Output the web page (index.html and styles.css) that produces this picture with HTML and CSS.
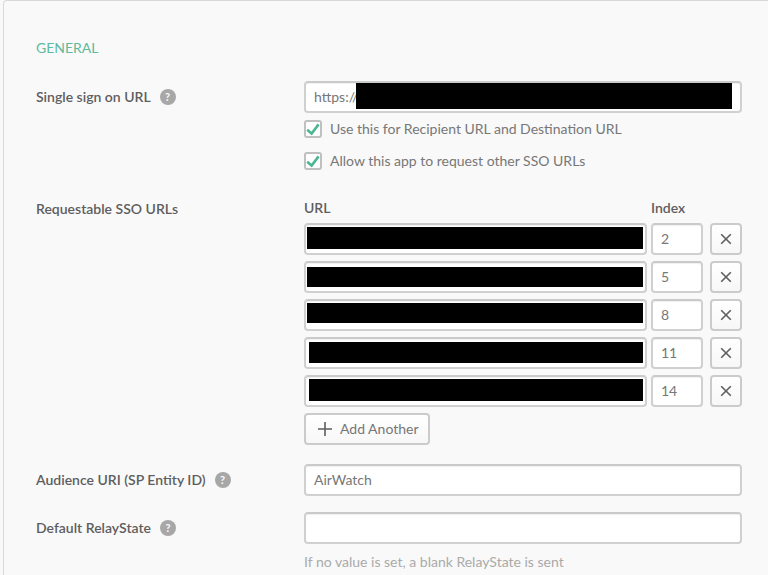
FILE: index.html
```html
<!DOCTYPE html>
<html lang="en">
<head>
<meta charset="utf-8">
<title>SAML Settings</title>
<link rel="stylesheet" href="styles.css">
</head>
<body>
<form class="panel">
  <h2 class="section-title">General</h2>

  <div class="field">
    <div class="field-label">
      <label for="sso-url">Single sign on URL</label>
      <button type="button" class="help" aria-label="Help: Single sign on URL">?</button>
    </div>
    <div class="field-body">
      <div class="masked">
        <input id="sso-url" class="input" type="text" value="https://">
        <span class="mask mask-main"></span>
      </div>
      <label class="option"><input type="checkbox" class="checkbox" checked>Use this for Recipient URL and Destination URL</label>
      <label class="option"><input type="checkbox" class="checkbox" checked>Allow this app to request other SSO URLs</label>
    </div>
  </div>

  <div class="field field-urls">
    <div class="field-label"><span id="urls-label">Requestable SSO URLs</span></div>
    <div class="field-body">
      <table class="urls" aria-labelledby="urls-label">
        <thead>
          <tr><th class="col-url" scope="col">URL</th><th class="col-index" scope="col">Index</th><td class="col-remove"></td></tr>
        </thead>
        <tbody>
          <tr>
            <td><div class="masked"><input class="input" type="text" aria-label="URL"><span class="mask mask-a"></span></div></td>
            <td class="col-index"><input class="input" type="text" value="2" aria-label="Index"></td>
            <td class="col-remove"><button type="button" class="btn btn-icon" aria-label="Remove"><svg class="cross" viewBox="0 0 12 12"><path d="M1.2 1.2 10.8 10.8M10.8 1.2 1.2 10.8"/></svg></button></td>
          </tr>
          <tr>
            <td><div class="masked"><input class="input" type="text" aria-label="URL"><span class="mask mask-b"></span></div></td>
            <td class="col-index"><input class="input" type="text" value="5" aria-label="Index"></td>
            <td class="col-remove"><button type="button" class="btn btn-icon" aria-label="Remove"><svg class="cross" viewBox="0 0 12 12"><path d="M1.2 1.2 10.8 10.8M10.8 1.2 1.2 10.8"/></svg></button></td>
          </tr>
          <tr>
            <td><div class="masked"><input class="input" type="text" aria-label="URL"><span class="mask mask-c"></span></div></td>
            <td class="col-index"><input class="input" type="text" value="8" aria-label="Index"></td>
            <td class="col-remove"><button type="button" class="btn btn-icon" aria-label="Remove"><svg class="cross" viewBox="0 0 12 12"><path d="M1.2 1.2 10.8 10.8M10.8 1.2 1.2 10.8"/></svg></button></td>
          </tr>
          <tr>
            <td><div class="masked"><input class="input" type="text" aria-label="URL"><span class="mask mask-d"></span></div></td>
            <td class="col-index"><input class="input" type="text" value="11" aria-label="Index"></td>
            <td class="col-remove"><button type="button" class="btn btn-icon" aria-label="Remove"><svg class="cross" viewBox="0 0 12 12"><path d="M1.2 1.2 10.8 10.8M10.8 1.2 1.2 10.8"/></svg></button></td>
          </tr>
          <tr>
            <td><div class="masked"><input class="input" type="text" aria-label="URL"><span class="mask mask-e"></span></div></td>
            <td class="col-index"><input class="input" type="text" value="14" aria-label="Index"></td>
            <td class="col-remove"><button type="button" class="btn btn-icon" aria-label="Remove"><svg class="cross" viewBox="0 0 12 12"><path d="M1.2 1.2 10.8 10.8M10.8 1.2 1.2 10.8"/></svg></button></td>
          </tr>
        </tbody>
      </table>
      <button type="button" class="btn btn-add"><svg class="plus" viewBox="0 0 14 14"><path d="M7 0V14M0 7H14"/></svg>Add Another</button>
    </div>
  </div>

  <div class="field">
    <div class="field-label">
      <label for="audience">Audience URI (SP Entity ID)</label>
      <button type="button" class="help" aria-label="Help: Audience URI">?</button>
    </div>
    <div class="field-body"><input id="audience" class="input" type="text" value="AirWatch"></div>
  </div>

  <div class="field">
    <div class="field-label">
      <label for="relay">Default RelayState</label>
      <button type="button" class="help" aria-label="Help: Default RelayState">?</button>
    </div>
    <div class="field-body">
      <input id="relay" class="input" type="text">
      <p class="hint">If no value is set, a blank RelayState is sent</p>
    </div>
  </div>
</form>
</body>
</html>
```
FILE: styles.css
```css
* { box-sizing: border-box; }

body {
  margin: 0;
  background: #f9f9f9;
  color: #777;
  font: 14px/20px Lato, "Open Sans", sans-serif;
}

.panel {
  min-height: 100vh;
  margin-left: 3px;
  padding: 37px 26px 0 32px;
  border: 1px solid #d8d8d8;
  border-right: 0;
  border-bottom: 0;
  border-radius: 4px 0 0 0;
}

.section-title {
  margin: 0 0 23px;
  color: #5fb99c;
  font-size: 14px;
  font-weight: 400;
  line-height: 20px;
  text-transform: uppercase;
}

.field {
  display: grid;
  grid-template-columns: 268px minmax(0, 1fr);
  margin-bottom: 16px;
}

.field-urls { margin-bottom: 19px; }

.field-label {
  display: flex;
  align-items: center;
  gap: 9px;
  height: 31px;
  color: #5e5e5e;
  font-weight: 600;
}

.help {
  width: 16px;
  height: 16px;
  padding: 0;
  border: 0;
  border-radius: 50%;
  background: #a7a7a7;
  color: #f9f9f9;
  font: 700 11px/16px Lato, sans-serif;
  text-align: center;
}

.input {
  display: block;
  width: 100%;
  height: 32px;
  padding: 0 8px 2px;
  border: 2px solid #d0d0d0;
  border-top-color: #cacaca;
  border-radius: 4px;
  background: #fff;
  color: #777;
  font: inherit;
  box-shadow: inset 0 1px 1px #f0f0f0;
}

.masked { position: relative; }

.mask {
  position: absolute;
  right: 4px;
  left: 3px;
  background: #000;
}

.mask-main { top: 2px; right: 10px; bottom: 4px; left: 52px; }
.mask-a { top: 4px; bottom: 6px; }
.mask-b { top: 6px; bottom: 6px; }
.mask-c { top: 4px; bottom: 8px; }
.mask-d { top: 5px; bottom: 6px; left: 5px; }
.mask-e { top: 4px; bottom: 6px; left: 5px; }

.option {
  display: flex;
  align-items: center;
  gap: 8px;
  height: 32px;
}

.checkbox {
  appearance: none;
  width: 18px;
  height: 18px;
  margin: 0;
  border: 2px solid #c0c0c0;
  border-radius: 3px;
  background: #fff;
}

.checkbox:checked {
  background: #fff url("data:image/svg+xml,%3Csvg xmlns='http://www.w3.org/2000/svg' viewBox='0 0 14 14'%3E%3Cpath d='M1.2 7.8 5.6 11.6 12.6 2.4' fill='none' stroke='%234cb695' stroke-width='2.6'/%3E%3C/svg%3E") center / 14px 14px no-repeat;
}

.urls {
  width: 100%;
  border-collapse: collapse;
  table-layout: fixed;
}

.urls th {
  height: 30px;
  padding: 0;
  color: #5e5e5e;
  font-weight: 600;
  text-align: left;
}

.urls td { padding: 0 0 6px; }
.urls thead td { padding: 0; }
.urls .col-index { width: 56px; padding-left: 4px; }
.urls .col-remove { width: 39px; padding-left: 7px; }

.btn {
  display: flex;
  align-items: center;
  justify-content: center;
  height: 32px;
  padding: 0;
  border: 2px solid #cbcbcb;
  border-radius: 4px;
  background: linear-gradient(#fff, #f7f7f7);
  color: #777;
  font: inherit;
}

.btn-icon { width: 32px; }

.btn-add {
  gap: 8px;
  padding: 0 9px 1px 12px;
}

.cross,
.plus {
  fill: none;
  stroke: #5e5e5e;
  stroke-width: 1.6;
}

.cross { width: 12px; height: 12px; }
.plus { width: 14px; height: 14px; }

.hint {
  margin: 8px 0 0;
  color: #aaa;
}
```
